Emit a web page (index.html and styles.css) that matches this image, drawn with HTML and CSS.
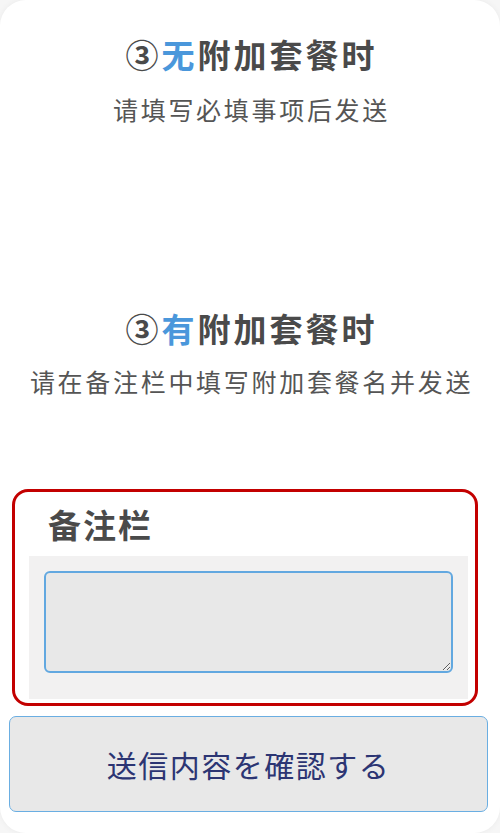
FILE: index.html
```html
<!DOCTYPE html>
<html lang="zh-CN">
<head>
    <meta charset="UTF-8">
    <meta name="viewport" content="width=device-width, initial-scale=1.0">
    <title>备注栏</title>
    <link rel="stylesheet" href="styles.css">
</head>
<body>
    <div class="card">
        <!-- 无附加套餐 -->
        <h2 class="title">③<span class="accent">无</span>附加套餐时</h2>
        <p class="note">请填写必填事项后发送</p>

        <!-- 有附加套餐 -->
        <h2 class="title title-second">③<span class="accent">有</span>附加套餐时</h2>
        <p class="note">请在备注栏中填写附加套餐名并发送</p>

        <!-- 备注栏 -->
        <div class="remark-box">
            <h3 class="remark-label">备注栏</h3>
            <div class="remark-field">
                <textarea class="remark-input"></textarea>
            </div>
        </div>

        <button class="confirm-btn" lang="ja">送信内容を確認する</button>
    </div>
</body>
</html>
```

FILE: styles.css
```css
* {
    margin: 0;
    padding: 0;
    box-sizing: border-box;
}
body {
    background: #f6f6f6;
    font-family: "Noto Sans CJK SC", "Noto Sans", sans-serif;
    color: #4a4a4a;
}
.card {
    background: #fff;
    min-height: 833px;
    border-radius: 26px;
    box-shadow: 0 0 6px rgba(0, 0, 0, 0.05);
    padding-top: 34px;
    overflow: hidden;
}
.title {
    font-size: 33px;
    line-height: 40px;
    font-weight: 700;
    letter-spacing: 3px;
    padding-left: 3px;
    text-align: center;
    color: #4a4a4a;
}
.title-second {
    margin-top: 184px;
}
.accent {
    color: #4a97db;
}
.note {
    margin-top: 20px;
    font-size: 25px;
    line-height: 30px;
    letter-spacing: 2.7px;
    padding-left: 3px;
    text-align: center;
    color: #555;
}
.title-second + .note {
    margin-top: 18px;
}
.remark-box {
    margin: 93px 0 0 12px;
    width: 466px;
    border: 3px solid #c30000;
    border-radius: 16px;
    padding: 12px 0 4px 0;
}
.remark-label {
    font-size: 33px;
    line-height: 40px;
    font-weight: 700;
    letter-spacing: 2px;
    padding-left: 33px;
    color: #4a4a4a;
}
.remark-field {
    margin: 12px 7px 0 14px;
    background: #f2f1f1;
    padding: 15px 15px 26px 15px;
}
.remark-input {
    display: block;
    width: 100%;
    height: 102px;
    background: #e8e8e8;
    border: 2px solid #62a8e0;
    border-radius: 6px;
    outline: none;
}
.confirm-btn {
    display: block;
    margin: 10px 0 0 9px;
    width: 479px;
    height: 96px;
    background: #e8e8e8;
    border: 1.5px solid #6aaee2;
    border-radius: 7px;
    font-family: "Noto Sans CJK JP", "Noto Sans", sans-serif;
    font-size: 30px;
    letter-spacing: 1.5px;
    color: #2c3573;
    cursor: pointer;
}
```
